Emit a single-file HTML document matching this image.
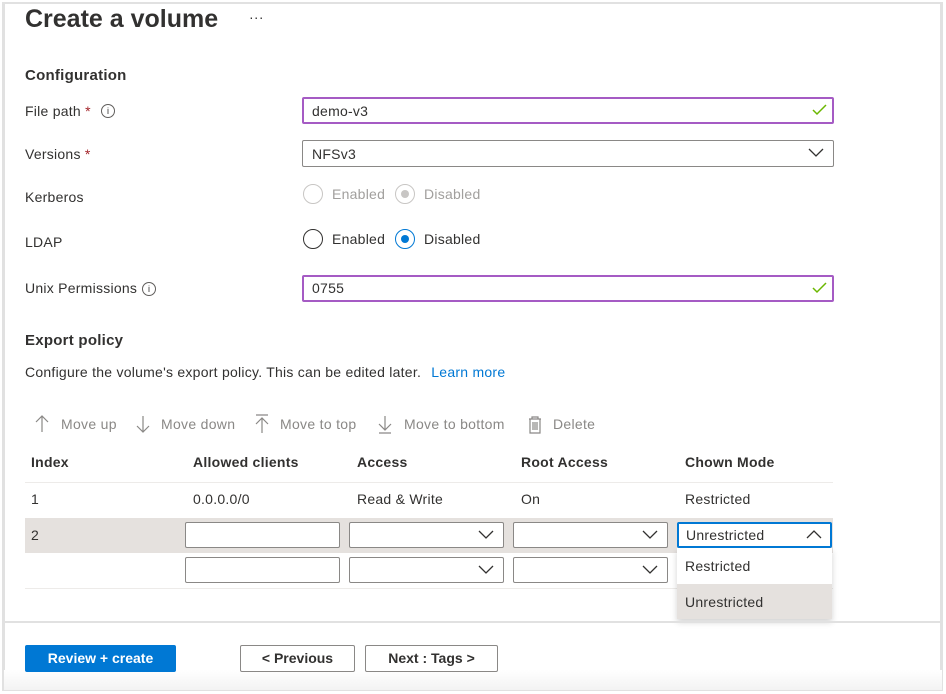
<!DOCTYPE html>
<html><head><meta charset="utf-8"><style>
*{box-sizing:border-box;margin:0;padding:0}
body{width:946px;height:694px;background:#fff;font-family:"Liberation Sans",sans-serif;color:#323130;position:relative;overflow:hidden;font-size:14px;letter-spacing:0.25px}
.a{position:absolute;white-space:nowrap}
.frame{position:absolute;left:2px;top:2px;width:941px;height:689px;border:3px solid #e1e1e1;border-top-width:2px}
.box{position:absolute;border:1px solid #8a8886;border-radius:2px;background:#fff}
.pur{border:2px solid #a55bc4}
.lbl{font-size:14px;color:#323130}
.rad{position:absolute;width:20px;height:20px;border-radius:50%;border:1px solid #323130}
.gray{color:#a19f9d}
.tb{color:#8a8886;font-size:14px;letter-spacing:0.3px}
.btn{position:absolute;border:1px solid #8a8886;border-radius:2px;background:#fff;font-weight:bold;font-size:14px;text-align:center;line-height:25px;color:#323130;letter-spacing:0}
</style></head><body>
<div class="frame"></div>
<div class="a" style="left:25px;top:5px;font-size:25px;font-weight:bold;color:#323130;letter-spacing:0">Create a volume</div>
<div class="a" style="left:249px;top:9px;font-size:14px">···</div>
<div class="a" style="left:25px;top:67px;font-size:15px;font-weight:bold">Configuration</div>

<div class="a lbl" style="left:25px;top:103px">File path <span style="color:#a4262c">*</span></div>
<div class="a" style="left:101px;top:104px;width:14px;height:14px;border:1px solid #605e5c;border-radius:50%;font-size:9px;text-align:center;line-height:12px;letter-spacing:0">i</div>
<div class="box pur" style="left:302px;top:97px;width:532px;height:27px"></div>
<div class="a" style="left:312px;top:103px">demo-v3</div>
<svg class="a" style="left:812px;top:104px" width="16" height="12"><path d="M1 6l4 4 9-9" fill="none" stroke="#6bb700" stroke-width="1.5"/></svg>

<div class="a lbl" style="left:25px;top:146px">Versions <span style="color:#a4262c">*</span></div>
<div class="box" style="left:302px;top:140px;width:532px;height:27px"></div>
<div class="a" style="left:312px;top:146px">NFSv3</div>
<svg class="a" style="left:808px;top:148px" width="16" height="10"><path d="M1 1l7 7 7-7" fill="none" stroke="#323130" stroke-width="1.3"/></svg>

<div class="a lbl" style="left:25px;top:189px">Kerberos</div>
<div class="rad" style="left:303px;top:184px;border-color:#c8c6c4"></div>
<div class="a gray" style="left:332px;top:186px">Enabled</div>
<div class="rad" style="left:395px;top:184px;border-color:#c8c6c4"></div>
<div class="a" style="left:401px;top:190px;width:8px;height:8px;border-radius:50%;background:#c8c6c4"></div>
<div class="a gray" style="left:424px;top:186px">Disabled</div>

<div class="a lbl" style="left:25px;top:234px">LDAP</div>
<div class="rad" style="left:303px;top:229px"></div>
<div class="a" style="left:332px;top:231px">Enabled</div>
<div class="rad" style="left:395px;top:229px;border-color:#0078d4"></div>
<div class="a" style="left:401px;top:235px;width:8px;height:8px;border-radius:50%;background:#0078d4"></div>
<div class="a" style="left:424px;top:231px">Disabled</div>

<div class="a lbl" style="left:25px;top:280px">Unix Permissions</div>
<div class="a" style="left:142px;top:282px;width:14px;height:14px;border:1px solid #605e5c;border-radius:50%;font-size:9px;text-align:center;line-height:12px;letter-spacing:0">i</div>
<div class="box pur" style="left:302px;top:275px;width:532px;height:27px"></div>
<div class="a" style="left:312px;top:280px">0755</div>
<svg class="a" style="left:812px;top:282px" width="16" height="12"><path d="M1 6l4 4 9-9" fill="none" stroke="#6bb700" stroke-width="1.5"/></svg>

<div class="a" style="left:25px;top:332px;font-size:15px;font-weight:bold">Export policy</div>
<div class="a" style="left:25px;top:364px">Configure the volume's export policy. This can be edited later. <span style="color:#0078d4;margin-left:6px">Learn more</span></div>

<svg class="a" style="left:35px;top:414px" width="600" height="22" fill="none" stroke="#8a8886" stroke-width="1.2">
<path d="M7 2v16M1 8l6-6 6 6"/>
<path d="M108 2v16M102 12l6 6 6-6"/>
<path d="M221 1h12M227 4v15M221 10l6-6 6 6"/>
<path d="M350 2v14M344 10l6 6 6-6M344 19h12"/>
<path d="M494 5h12M497 5v-2h6v2M495 5v14h10v-14M498 8v8M500 8v8M502 8v8"/>
</svg>
<div class="a tb" style="left:61px;top:416px">Move up</div>
<div class="a tb" style="left:161px;top:416px">Move down</div>
<div class="a tb" style="left:280px;top:416px">Move to top</div>
<div class="a tb" style="left:404px;top:416px">Move to bottom</div>
<div class="a tb" style="left:553px;top:416px">Delete</div>

<div class="a" style="left:31px;top:454px;font-weight:bold">Index</div>
<div class="a" style="left:193px;top:454px;font-weight:bold">Allowed clients</div>
<div class="a" style="left:357px;top:454px;font-weight:bold">Access</div>
<div class="a" style="left:521px;top:454px;font-weight:bold">Root Access</div>
<div class="a" style="left:685px;top:454px;font-weight:bold">Chown Mode</div>
<div class="a" style="left:25px;top:482px;width:808px;height:1px;background:#edebe9"></div>
<div class="a" style="left:31px;top:491px">1</div>
<div class="a" style="left:193px;top:491px">0.0.0.0/0</div>
<div class="a" style="left:357px;top:491px">Read &amp; Write</div>
<div class="a" style="left:521px;top:491px">On</div>
<div class="a" style="left:685px;top:491px">Restricted</div>
<div class="a" style="left:25px;top:518px;width:808px;height:35px;background:#e5e1de"></div>
<div class="a" style="left:31px;top:527px">2</div>
<div class="a" style="left:25px;top:588px;width:808px;height:1px;background:#edebe9"></div>

<div class="box" style="left:185px;top:522px;width:155px;height:26px"></div>
<div class="box" style="left:349px;top:522px;width:155px;height:26px"></div>
<div class="box" style="left:513px;top:522px;width:155px;height:26px"></div>
<div class="box" style="left:185px;top:557px;width:155px;height:26px"></div>
<div class="box" style="left:349px;top:557px;width:155px;height:26px"></div>
<div class="box" style="left:513px;top:557px;width:155px;height:26px"></div>
<svg class="a" style="left:478px;top:530px" width="16" height="10"><path d="M1 1l7 7 7-7" fill="none" stroke="#323130" stroke-width="1.3"/></svg>
<svg class="a" style="left:642px;top:530px" width="16" height="10"><path d="M1 1l7 7 7-7" fill="none" stroke="#323130" stroke-width="1.3"/></svg>
<svg class="a" style="left:478px;top:565px" width="16" height="10"><path d="M1 1l7 7 7-7" fill="none" stroke="#323130" stroke-width="1.3"/></svg>
<svg class="a" style="left:642px;top:565px" width="16" height="10"><path d="M1 1l7 7 7-7" fill="none" stroke="#323130" stroke-width="1.3"/></svg>

<div class="a" style="left:677px;top:548px;width:155px;height:71px;background:#fff;box-shadow:0 3px 6px rgba(0,0,0,.18)"></div>
<div class="a" style="left:677px;top:584px;width:155px;height:35px;background:#e5e1de"></div>
<div class="a" style="left:685px;top:558px">Restricted</div>
<div class="a" style="left:685px;top:594px">Unrestricted</div>
<div class="box" style="left:677px;top:522px;width:155px;height:26px;border:2px solid #0078d4"></div>
<div class="a" style="left:686px;top:527px">Unrestricted</div>
<svg class="a" style="left:806px;top:530px" width="16" height="10"><path d="M1 8l7-7 7 7" fill="none" stroke="#323130" stroke-width="1.3"/></svg>

<div class="a" style="left:4px;top:621px;width:938px;height:2px;background:#e1e1e1"></div>
<div class="a" style="left:4px;top:670px;width:938px;height:20px;background:linear-gradient(#fff,#f3f3f3)"></div>
<div class="btn" style="left:25px;top:645px;width:151px;height:27px;background:#0078d4;border-color:#0078d4;color:#fff">Review + create</div>
<div class="btn" style="left:240px;top:645px;width:115px;height:27px">&lt; Previous</div>
<div class="btn" style="left:365px;top:645px;width:133px;height:27px">Next : Tags &gt;</div>
</body></html>
